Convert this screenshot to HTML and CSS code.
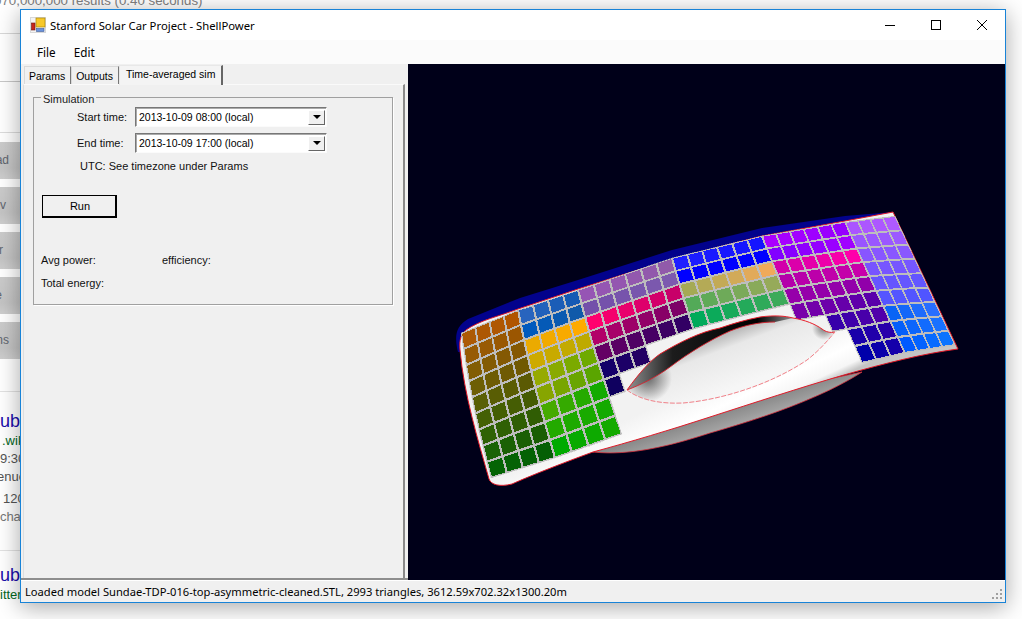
FILE: index.html
```html
<!DOCTYPE html>
<html lang="en">
<head>
<meta charset="utf-8">
<title>Stanford Solar Car Project - ShellPower</title>
<link rel="stylesheet" href="styles.css">
</head>
<body>
<div class="page">
  <div class="page-count">070,000,000 results (0.40 seconds)</div>
  <div class="page-side">
    <div class="top-rule"></div>
    <div class="top-rule top-rule-2"></div>
    <div class="top-rule top-rule-3"></div>
    <div class="side-btn">ad</div>
    <div class="side-btn side-btn-v">v</div>
    <div class="side-btn side-btn-r">r</div>
    <div class="side-btn side-btn-e">e</div>
    <div class="side-btn">ns</div>
    <div class="side-rule"></div>
    <div class="res-title">ub</div>
    <div class="res-url">.wik</div>
    <div class="res-text res-in-1">9:30</div>
    <div class="res-text res-in-2">enue</div>
    <div class="res-text res-gap">120</div>
    <div class="res-text res-link res-in-3">icha</div>
    <div class="side-rule side-rule-2"></div>
    <div class="res-title">ub</div>
    <div class="res-url res-in-1">itter</div>
  </div>
</div>

<div class="window">
  <div class="titlebar">
    <svg class="app-icon" viewBox="0 0 16 16" width="16" height="16">
      <rect x="0" y="0" width="16" height="16" fill="#d8d8d8"/>
      <rect x="1" y="1" width="14" height="14" fill="#f4f4f4"/>
      <rect x="6" y="1" width="9" height="9" fill="#f7c82a" stroke="#a8860c" stroke-width="0.7"/>
      <rect x="1.5" y="6" width="3.5" height="7" fill="#c8261c" stroke="#6d1410" stroke-width="0.6"/>
      <rect x="6.5" y="11.5" width="7.5" height="3" fill="#6a92dc" stroke="#3f5c98" stroke-width="0.6"/>
    </svg>
    <span class="title-text">Stanford Solar Car Project - ShellPower</span>
    <div class="win-controls">
      <svg class="win-btn" viewBox="0 0 46 30" width="46" height="30"><path d="M18 15.5H28" stroke="#000" fill="none"/></svg>
      <svg class="win-btn" viewBox="0 0 46 30" width="46" height="30"><rect x="18.5" y="10.5" width="9" height="9" stroke="#000" fill="none"/></svg>
      <svg class="win-btn" viewBox="0 0 46 30" width="46" height="30"><path d="M18 10L28 20M28 10L18 20" stroke="#000" fill="none"/></svg>
    </div>
  </div>
  <div class="menubar">
    <span class="menu-item">File</span>
    <span class="menu-item">Edit</span>
  </div>
  <div class="workspace">
    <div class="left-pane">
      <div class="tabs">
        <div class="tab">Params</div>
        <div class="tab">Outputs</div>
        <div class="tab tab-active">Time-averaged sim</div>
      </div>
      <div class="tab-page">
        <fieldset class="group">
          <legend>Simulation</legend>
          <div class="field-row">
            <label class="field-label">Start time:</label>
            <div class="combo"><span class="combo-text">2013-10-09 08:00 (local)</span><span class="combo-btn"><i class="arrow"></i></span></div>
          </div>
          <div class="field-row">
            <label class="field-label">End time:</label>
            <div class="combo"><span class="combo-text">2013-10-09 17:00 (local)</span><span class="combo-btn"><i class="arrow"></i></span></div>
          </div>
          <div class="utc-note">UTC: See timezone under Params</div>
          <button class="run-btn" type="button">Run</button>
          <div class="stats-row">
            <span class="stat-a">Avg power:</span>
            <span>efficiency:</span>
          </div>
          <div class="stats-row stats-row-2">
            <span>Total energy:</span>
          </div>
        </fieldset>
      </div>
    </div>
    <div class="viewport">
      <svg id="model" class="model" viewBox="408 64 597 516" width="597" height="516">
        <defs>
          <linearGradient id="under" gradientUnits="userSpaceOnUse" x1="720" y1="405" x2="730" y2="436">
            <stop offset="0" stop-color="#7c7c7c"/>
            <stop offset="1" stop-color="#b4b4b4"/>
          </linearGradient>
          <linearGradient id="skin" gradientUnits="userSpaceOnUse" x1="700" y1="385" x2="722" y2="432">
            <stop offset="0" stop-color="#f2f2f2"/>
            <stop offset="0.55" stop-color="#fff"/>
            <stop offset="0.85" stop-color="#f6f6f6"/>
            <stop offset="1" stop-color="#c4c4c4"/>
          </linearGradient>
          <linearGradient id="hole" gradientUnits="userSpaceOnUse" x1="722" y1="332" x2="742" y2="385">
            <stop offset="0" stop-color="#b0b0b0"/>
            <stop offset="0.3" stop-color="#e8e8e8"/>
            <stop offset="1" stop-color="#f6f6f6"/>
          </linearGradient>
          <linearGradient id="band" gradientUnits="userSpaceOnUse" x1="630" y1="0" x2="800" y2="0">
            <stop offset="0" stop-color="#8a8a8a"/>
            <stop offset="0.25" stop-color="#1c1c1c"/>
            <stop offset="0.75" stop-color="#000"/>
            <stop offset="1" stop-color="#aaa"/>
          </linearGradient>
          <radialGradient id="holeTip" gradientUnits="userSpaceOnUse" cx="648" cy="378" r="24">
            <stop offset="0" stop-color="#666"/>
            <stop offset="1" stop-color="#666" stop-opacity="0"/>
          </radialGradient>
          <radialGradient id="holeEnd" gradientUnits="userSpaceOnUse" cx="824" cy="328" r="12">
            <stop offset="0" stop-color="#777"/>
            <stop offset="1" stop-color="#777" stop-opacity="0"/>
          </radialGradient>
        </defs>
        <path class="m-under" d="M593 452C630 456 670 446 710 433C770 416 825 396 862 372L800 385L710 412Z"/>
        <path class="m-rim" d="M458 352C454 336 456 326 468 319L520 298L578 280L672 250L762 228L845 216L893 212L896 220L480 330L462 352Z"/>
        <path class="m-skin" d="M460 350C459 340 461 334 466 330C480 320 500 316 518 309L578 289L672 259L762 236L845 221L893 212L958 349C890 358 800 388 710 417C670 430 630 442 593 452C560 464 530 476 512 484C500 487 491 485 489 479C478 440 464 395 460 350Z"/>
        <g id="cells" class="m-cells"></g>
        <path class="m-hole" d="M627 390C640 372 650 361 660 354C680 342 700 332 720 328C735 323 745 320 760 317C775 315 785 316 793 318C805 320 815 324 822 329C826 332 830 333 835 332C828 340 820 350 807 360C770 385 720 400 683 403C660 404 640 400 627 390Z"/>
        <path class="m-hole-tip" d="M627 390C640 372 650 361 660 354L690 360L680 403C660 404 640 400 627 390Z"/>
        <path class="m-hole-end" d="M793 318C805 320 815 324 822 329C826 332 830 333 835 332C828 340 822 346 815 352L795 335Z"/>
        <path class="m-band" d="M627 390C640 372 650 361 660 354C680 342 700 332 720 328C735 323 745 320 760 317C775 315 785 316 793 318L775 322C760 322 745 325 730 331C710 340 690 352 670 367C655 378 640 385 627 390Z"/>
        <path class="m-hole-top" d="M627 390C640 372 650 361 660 354C680 342 700 332 720 328C735 323 745 320 760 317C775 315 785 316 793 318C805 320 815 324 822 329C826 332 830 333 835 332"/>
        <path class="m-hole-in" d="M627 390C640 385 655 378 670 367C690 352 710 340 730 331C745 325 760 322 775 322"/>
        <path class="m-hole-low" d="M627 390C640 400 660 404 683 403C720 400 770 385 807 360C820 350 828 340 835 332"/>
      </svg>
    </div>
  </div>
  <div class="statusbar">
    <span class="status-text">Loaded model Sundae-TDP-016-top-asymmetric-cleaned.STL, 2993 triangles, 3612.59x702.32x1300.20m</span>
    <svg class="grip" viewBox="0 0 12 12" width="12" height="12">
      <path d="M9 1h2v2H9zM5 5h2v2H5zM9 5h2v2H9zM1 9h2v2H1zM5 9h2v2H5zM9 9h2v2H9z" fill="#a0a0a0"/>
    </svg>
  </div>
</div>
<script src="app.js"></script>
</body>
</html>
```
FILE: styles.css
```css
* { box-sizing: border-box; }
html, body { margin: 0; height: 100%; background: #fff; overflow: hidden; }
body { font-family: "Liberation Sans", Arial, sans-serif; position: relative; width: 1022px; height: 619px; }

.page { position: absolute; inset: 0; overflow: hidden; background: #fff; }
.page-count { color: #808080; font-size: 13.3px; line-height: 16px; margin-top: -7px; white-space: nowrap; margin-left: -6px; }
.page-side { position: absolute; left: 0; top: 33px; width: 20px; display: flex; flex-direction: column; overflow: hidden; }
.top-rule { height: 1px; flex: none; background: #d8d8d8; }
.top-rule-2 { margin-top: 47px; background: #c8c8c8; }
.top-rule-3 { margin-top: 50px; margin-bottom: 9px; background: #dcdcdc; }
.side-btn { width: 20px; height: 37px; flex: none; margin-bottom: 8px; padding-right: 11px; background: linear-gradient(#cbcbcb, #c4c4c4 70%, #cecece); color: #60656e; font-size: 12px; line-height: 37px; display: flex; justify-content: flex-end; white-space: nowrap; }
.side-btn-v { padding-right: 14px; }
.side-btn-r { padding-right: 17px; }
.side-btn-e { padding-right: 18px; }
.side-rule { width: 20px; height: 1px; background: #e2e2e2; margin-top: 24px; margin-bottom: 18px; flex: none; }
.side-rule-2 { margin-top: 24px; margin-bottom: 13px; }
.res-title { color: #1a0dab; font-size: 18px; line-height: 22px; white-space: nowrap; }
.res-url { color: #006621; font-size: 13px; line-height: 18px; white-space: nowrap; padding-left: 2px; }
.res-text { color: #545454; font-size: 13px; line-height: 18px; white-space: nowrap; }
.res-gap { margin-top: 4px; padding-left: 3px; }
.res-in-1 { padding-left: 0; }
.res-in-2 { margin-left: -3px; }
.res-in-3 { margin-left: -3px; }
.res-link { color: #777; }

.window { position: absolute; left: 20px; top: 9px; width: 986px; height: 594px; background: #f0f0f0; border: 1px solid #1883d7; box-shadow: 0 4px 22px rgba(0,0,0,.35); display: flex; flex-direction: column; }

.titlebar { height: 30px; flex: none; background: #fff; display: flex; align-items: center; padding-left: 9px; font-size: 12px; color: #000; }
.app-icon { flex: none; }
.title-text { margin-left: 4px; font-family: "Noto Sans", sans-serif; font-size: 11.3px; }
.win-controls { margin-left: auto; display: flex; }
.win-btn { display: block; }

.menubar { height: 24px; flex: none; background: #fbfbfb; display: flex; align-items: center; padding-left: 7px; font-family: "Noto Sans", sans-serif; font-size: 11.7px; }
.menu-item { padding: 0 9px; }

.workspace { flex: 1; display: flex; min-height: 0; }
.left-pane { width: 387px; flex: none; display: flex; flex-direction: column; background: #f0f0f0; padding: 1px 3px 0 2px; border-bottom: 2px solid #8e8e8e; }
.tabs { display: flex; align-items: flex-end; height: 19px; flex: none; padding-left: 1px; font-size: 10.5px; position: relative; z-index: 1; }
.tab { height: 18px; line-height: 18px; padding: 0 5px 0 4px; background: #f0f0f0; border: 1px solid #d9d9d9; border-right-color: #777; border-bottom: 0; color: #000; }
.tab-active { height: 20px; margin-bottom: -1px; line-height: 17px; background: #f4f4f4; padding: 0 6px; border-color: #e8e8e8; border-right: 2px solid #666; }
.tab-page { flex: 1; border: 1px solid #dedede; border-top-color: #fafafa; border-right: 2px solid #8a8a8a; border-bottom: 0; padding: 4px 10px 0 9px; background: #f0f0f0; }

.group { margin: 0; height: 216px; border: 1px solid #a0a0a0; box-shadow: 1px 1px 0 #fff; padding: 0 0 0 7px; min-width: 0; display: flex; flex-direction: column; }
.group legend { padding: 4px 2px 0; margin-left: 0; font-size: 11px; color: #222; line-height: 12px; }
.field-row { display: flex; align-items: center; height: 20px; flex: none; }
.field-row:first-of-type { margin-top: 2px; }
.field-row + .field-row { margin-top: 6px; }
.field-label { width: 94px; padding-left: 36px; color: #111; font-size: 11px; white-space: nowrap; flex: none; }
.combo { width: 192px; height: 20px; flex: none; background: #fff; border: 1px solid; border-color: #777 #fbfbfb #fbfbfb #777; box-shadow: inset 1px 1px 0 #aaa; display: flex; align-items: center; justify-content: space-between; padding: 1px 1px 1px 3px; }
.combo-text { font-size: 10.5px; color: #000; white-space: nowrap; }
.combo-btn { width: 17px; height: 15px; background: #f0f0f0; border: 1px solid; border-color: #fff #666 #666 #fff; display: flex; align-items: center; justify-content: center; }
.arrow { width: 0; height: 0; border-left: 4px solid transparent; border-right: 4px solid transparent; border-top: 4px solid #000; }
.utc-note { margin: 7px 0 0 39px; font-size: 11px; color: #111; line-height: 13px; }
.run-btn { margin: 22px 0 0 1px; width: 75px; height: 23px; padding: 0 0 0 2px; font: 11px "Liberation Sans", Arial, sans-serif; color: #000; background: #f0f0f0; border: 2px solid #000; border-top-width: 1px; border-left-width: 1px; outline: none; align-self: flex-start; flex: none; }
.stats-row { margin-top: 36px; font-size: 11px; color: #111; display: flex; line-height: 13px; }
.stats-row-2 { margin-top: 10px; }
.stat-a { width: 121px; }

.viewport { flex: 1; background: #000019; overflow: hidden; min-width: 0; }
.model { display: block; }
.m-under { fill: url(#under); stroke: #d8323e; stroke-width: .8; }
.m-rim { fill: #02028c; }
.m-skin { fill: url(#skin); stroke: #e01a28; stroke-width: 1; }
.m-hole { fill: url(#hole); }
.m-hole-tip { fill: url(#holeTip); }
.m-hole-end { fill: url(#holeEnd); }
.m-band { fill: url(#band); }
.m-hole-top { fill: none; stroke: #e8202c; stroke-width: 1; }
.m-hole-in { fill: none; stroke: #d8202c; stroke-width: .9; }
.m-hole-low { fill: none; stroke: #f08088; stroke-width: 1; stroke-dasharray: 5 1.5; }
.m-cells { shape-rendering: crispEdges; }
.m-cell-base { fill: #bdbdbd; stroke: #bdbdbd; stroke-width: .4; }

.statusbar { height: 22px; flex: none; background: #f0f0f0; display: flex; align-items: center; justify-content: space-between; padding: 0 2px 0 4px; font-family: "Noto Sans", sans-serif; font-size: 11.17px; color: #000; border-top: 1px solid #fff; }
.status-text { white-space: nowrap; }
.grip { flex: none; margin-top: 4px; }
```
FILE: app.js
```js
// Draws the solar-cell strings on the shell as an SVG grid.
var NS = "http://www.w3.org/2000/svg";
var topEdge = [[0,461,333],[4,518,310],[8,578,290],[14,672,258],[20,762,236],[26,845,222],[30,895,216]];
var botEdge = [[0,491,478],[4,555,458],[8,622,434],[14,718,403],[20,819,373],[26,905,353],[30,955,345]];

function along(edge, c) {
  for (var i = 0; i < edge.length - 1; i++) {
    var a = edge[i], b = edge[i + 1];
    if (c <= b[0]) {
      var t = (c - a[0]) / (b[0] - a[0]);
      return [a[1] + (b[1] - a[1]) * t, a[2] + (b[2] - a[2]) * t];
    }
  }
  return [edge[edge.length - 1][1], edge[edge.length - 1][2]];
}
function at(c, r) {
  var a = along(topEdge, c), b = along(botEdge, c), s = r / 9;
  var warp = 0.065 * Math.pow(Math.sin(Math.PI * c / 30), 0.8);
  var t = s - warp * Math.sin(Math.PI * s);
  var bow = Math.sin(Math.PI * s) * -2.5 * (1 - c / 30);
  return [a[0] + (b[0] - a[0]) * t + bow, a[1] + (b[1] - a[1]) * t];
}
function mix(a, b, t) {
  return [0, 1, 2].map(function (i) { return a[i] + (b[i] - a[i]) * t; });
}

// c0,c1 / r0,r1 are inclusive; colours: top-left, top-right, bottom-left, bottom-right
var blocks = [
  [0,3,0,8,[172,90,5],[176,85,0],[5,100,5],[5,95,5]],
  [4,7,0,1,[40,100,190],[20,90,180],[0,90,190],[15,90,170]],
  [4,7,2,3,[235,170,0],[255,170,0],[205,170,0],[190,170,0]],
  [4,7,4,5,[150,170,0],[110,170,0],[135,165,0],[90,165,0]],
  [4,7,6,8,[70,170,0],[20,170,0],[0,170,0],[20,170,0]],
  [8,13,0,1,[150,85,180],[145,90,170],[115,80,170],[125,90,175]],
  [8,13,2,4,[255,0,110],[200,0,105],[100,0,100],[50,0,100]],
  [8,10,5,5,[20,0,105],[35,0,100],[20,0,105],[35,0,100]],
  [8,8,6,6,[15,0,95],[15,0,95],[15,0,95],[15,0,95]],
  [14,19,0,1,[30,30,255],[20,20,255],[0,0,255],[0,0,255]],
  [14,19,2,4,[165,170,85],[240,170,90],[0,170,90],[60,170,90]],
  [20,25,0,1,[170,0,255],[150,0,255],[130,0,255],[160,0,255]],
  [20,25,2,5,[210,0,170],[255,0,170],[120,0,170],[90,0,170]],
  [22,25,6,6,[55,0,170],[80,0,170],[55,0,170],[80,0,170]],
  [23,25,7,8,[25,0,170],[40,0,170],[0,0,170],[20,0,170]],
  [26,29,0,5,[170,85,255],[175,90,255],[85,85,255],[80,85,255]],
  [26,29,6,8,[10,100,245],[40,110,255],[0,90,255],[10,115,255]]
];

var host = document.getElementById("cells");
function quad(c, r, inset) {
  var pts = [
    at(c + inset, r + inset), at(c + 1 - inset, r + inset),
    at(c + 1 - inset, r + 1 - inset), at(c + inset, r + 1 - inset)
  ];
  return pts.map(function (p) { return p[0].toFixed(1) + "," + p[1].toFixed(1); }).join(" ");
}
function addPoly(points, cls, fill) {
  var el = document.createElementNS(NS, "polygon");
  el.setAttribute("points", points);
  if (cls) el.setAttribute("class", cls);
  if (fill) el.setAttribute("fill", fill);
  host.appendChild(el);
}
blocks.forEach(function (b) {
  for (var c = b[0]; c <= b[1]; c++) for (var r = b[2]; r <= b[3]; r++) addPoly(quad(c, r, 0), "m-cell-base");
});
blocks.forEach(function (b) {
  for (var c = b[0]; c <= b[1]; c++) for (var r = b[2]; r <= b[3]; r++) {
    var u = b[1] > b[0] ? (c - b[0]) / (b[1] - b[0]) : 0;
    var v = b[3] > b[2] ? (r - b[2]) / (b[3] - b[2]) : 0;
    var col = mix(mix(b[4], b[5], u), mix(b[6], b[7], u), v);
    addPoly(quad(c, r, 0.065), "", "rgb(" + col.map(Math.round).join(",") + ")");
  }
});
```
